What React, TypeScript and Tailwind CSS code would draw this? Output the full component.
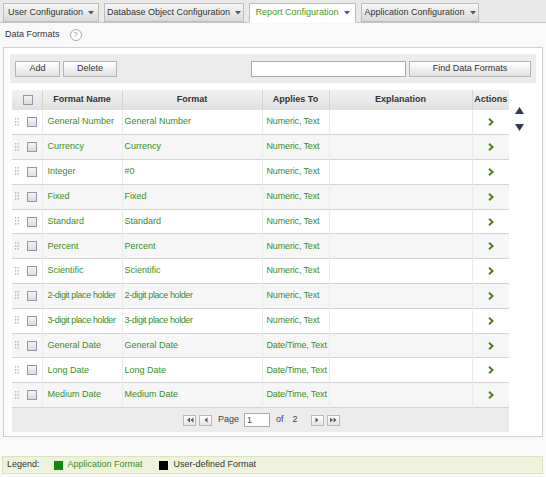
import React from 'react';

const rows = [
  ['General Number', 'General Number', 'Numeric, Text'],
  ['Currency', 'Currency', 'Numeric, Text'],
  ['Integer', '#0', 'Numeric, Text'],
  ['Fixed', 'Fixed', 'Numeric, Text'],
  ['Standard', 'Standard', 'Numeric, Text'],
  ['Percent', 'Percent', 'Numeric, Text'],
  ['Scientific', 'Scientific', 'Numeric, Text'],
  ['2-digit place holder', '2-digit place holder', 'Numeric, Text'],
  ['3-digit place holder', '3-digit place holder', 'Numeric, Text'],
  ['General Date', 'General Date', 'Date/Time, Text'],
  ['Long Date', 'Long Date', 'Date/Time, Text'],
  ['Medium Date', 'Medium Date', 'Date/Time, Text'],
];

const tabs = [
  { label: 'User Configuration', w: 'w-[96px]' },
  { label: 'Database Object Configuration', w: 'w-[140px]' },
  { label: 'Report Configuration', w: 'w-[107px]', active: true },
  { label: 'Application Configuration', w: 'w-[118px]' },
];

function Caret() {
  return (
    <svg width="6" height="4" viewBox="0 0 6 4" className="ml-[5px] shrink-0">
      <path d="M0 0h6L3 3.5z" fill="#555" />
    </svg>
  );
}

function Check() {
  return <span className="inline-block w-[10px] h-[10px] border border-[#8a9aac] bg-gradient-to-b from-[#f4f4f4] to-[#dcdcdc]" />;
}

function Grip() {
  return (
    <svg width="4" height="9" viewBox="0 0 4 9">
      {[0, 3, 6].map((y) => (
        <g key={y} fill="#b5b5b5">
          <rect x="0" y={y} width="1.2" height="1.6" />
          <rect x="2.6" y={y} width="1.2" height="1.6" />
        </g>
      ))}
    </svg>
  );
}

function Chevron() {
  return (
    <svg width="6" height="8" viewBox="0 0 6 8">
      <path d="M1 0.8L4.6 4 1 7.2" stroke="#4e7d16" strokeWidth="1.9" fill="none" />
    </svg>
  );
}

function PagerBtn({ kind }: { kind: 'first' | 'prev' | 'next' | 'last' }) {
  const paths = {
    first: 'M4 1.5L1 4l3 2.5zM7.5 1.5L4.5 4l3 2.5z',
    prev: 'M5.5 1.5L2.5 4l3 2.5z',
    next: 'M2.5 1.5L5.5 4l-3 2.5z',
    last: 'M1 1.5L4 4 1 6.5zM4.5 1.5L7.5 4l-3 2.5z',
  };
  return (
    <span className="w-[13px] h-[11px] border border-[#b9b9b9] bg-gradient-to-b from-white to-[#e4e4e4] flex items-center justify-center">
      <svg width="8" height="8" viewBox="0 0 8 8">
        <path d={paths[kind]} fill="#555" />
      </svg>
    </span>
  );
}

function Button({ children, className = '' }: { children: React.ReactNode; className?: string }) {
  return (
    <button className={`h-[16px] border border-[#b4b4b4] bg-gradient-to-b from-white to-[#e1e1e1] text-[#333] text-[9px] ${className}`}>
      {children}
    </button>
  );
}

export default function App() {
  return (
    <div className="w-[546px] h-[477px] bg-[#f9f9f9] text-[9px] text-[#333] overflow-hidden whitespace-nowrap" style={{ fontFamily: '"Liberation Sans", Arial, sans-serif' }}>
      {/* tab bar */}
      <div className="h-[23px] bg-[#e9e9e9] border-b border-[#c6c6c6] flex items-end gap-[5px] pl-[3px]">
        {tabs.map((t) => (
          <div
            key={t.label}
            className={`${t.w} flex items-center justify-center border border-[#bdbdbd] ${
              t.active
                ? 'bg-white text-[#4a9a1e] border-b-white -mb-px h-[20px]'
                : 'bg-gradient-to-b from-[#f7f7f7] to-[#d9d9d9] text-[#333] h-[19px]'
            }`}
          >
            {t.label}
            <Caret />
          </div>
        ))}
      </div>

      {/* title */}
      <div className="h-[23px] flex items-center pl-[5px] gap-[10px]">
        <span className="text-[#333]">Data Formats</span>
        <span className="w-[12px] h-[12px] rounded-full border border-[#a8a8a8] bg-white text-[#888] text-[8px] leading-none flex items-center justify-center">?</span>
      </div>

      {/* panel */}
      <div className="ml-[3px] mt-[1px] w-[540px] h-[390px] bg-white border border-[#cfcfcf] pt-[6px] px-[6px]">
        <div className="h-[29px] bg-[#ececec] flex items-center px-[5px]">
          <Button className="w-[45px]">Add</Button>
          <Button className="w-[54px] ml-[3px]">Delete</Button>
          <input className="ml-auto w-[155px] h-[16px] border border-[#a9a9a9] bg-white" />
          <Button className="w-[122px] ml-[3px]">Find Data Formats</Button>
        </div>

        <div className="flex mt-[7px] pl-[2px]">
          <div className="w-[497px]">
            <table className="w-[497px] table-fixed border-collapse">
              <colgroup>
                <col className="w-[30px]" />
                <col className="w-[80px]" />
                <col className="w-[140px]" />
                <col className="w-[67px]" />
                <col className="w-[143px]" />
                <col className="w-[37px]" />
              </colgroup>
              <thead>
                <tr className="h-[20px] bg-gradient-to-b from-[#f2f2f2] to-[#e0e0e0] text-[#333]">
                  <th className="border-r border-[#d6d6d6]">
                    <div className="flex justify-center pl-[2px]">
                      <Check />
                    </div>
                  </th>
                  <th className="border-r border-[#d6d6d6] font-bold">Format Name</th>
                  <th className="border-r border-[#d6d6d6] font-bold">Format</th>
                  <th className="border-r border-[#d6d6d6] font-bold">Applies To</th>
                  <th className="border-r border-[#d6d6d6] font-bold">Explanation</th>
                  <th className="font-bold">Actions</th>
                </tr>
              </thead>
              <tbody>
                {rows.map((r, i) => (
                  <tr key={r[0]} className={`h-[24.8px] border-b border-[#d4d4d4] text-[#3b8d2a] ${i % 2 ? 'bg-[#f6f6f6]' : 'bg-white'}`}>
                    <td className="border-r border-[#ebebeb]">
                      <div className="flex items-center pl-[3px] gap-[8px]">
                        <Grip />
                        <Check />
                      </div>
                    </td>
                    <td className={`pl-[5px] overflow-hidden border-r border-[#ebebeb] ${r[0].length > 15 ? 'tracking-[-0.4px]' : ''}`}>{r[0]}</td>
                    <td className={`pl-[2px] overflow-hidden border-r border-[#ebebeb] ${r[1].length > 15 ? 'tracking-[-0.4px]' : ''}`}>{r[1]}</td>
                    <td className="pl-[4px] overflow-hidden border-r border-[#ebebeb] tracking-[-0.15px]">{r[2]}</td>
                    <td className="border-r border-[#ebebeb]" />
                    <td>
                      <div className="flex justify-center">
                        <Chevron />
                      </div>
                    </td>
                  </tr>
                ))}
              </tbody>
            </table>
            <div className="h-[24px] bg-[#ececec] flex items-center gap-[3px] pl-[171px] text-[#444]">
              <PagerBtn kind="first" />
              <PagerBtn kind="prev" />
              <span className="ml-[3px]">Page</span>
              <input className="w-[26px] h-[14px] border border-[#a9a9a9] bg-white text-[9px] pl-[2px] ml-[2px]" defaultValue="1" />
              <span className="ml-[3px]">of</span>
              <span className="ml-[6px] mr-[10px]">2</span>
              <PagerBtn kind="next" />
              <PagerBtn kind="last" />
            </div>
          </div>
          <div className="flex flex-col items-center pl-[6px] pt-[17px] gap-[10px]">
            <svg width="9" height="7" viewBox="0 0 9 7">
              <path d="M4.5 0L9 7H0z" fill="#2f3d4c" />
            </svg>
            <svg width="9" height="7" viewBox="0 0 9 7">
              <path d="M0 0h9L4.5 7z" fill="#2f3d4c" />
            </svg>
          </div>
        </div>
      </div>

      {/* legend */}
      <div className="ml-[2px] mt-[19px] w-[541px] h-[18px] bg-[#eef4dc] border border-[#dbe4c0] flex items-center pl-[4px] text-[#333]">
        <span>Legend:</span>
        <span className="ml-[14px] w-[9px] h-[9px] bg-[#0f8a0f]" />
        <span className="ml-[5px] text-[#3b8d2a]">Application Format</span>
        <span className="ml-[16px] w-[9px] h-[9px] bg-black" />
        <span className="ml-[6px]">User-defined Format</span>
      </div>
    </div>
  );
}
